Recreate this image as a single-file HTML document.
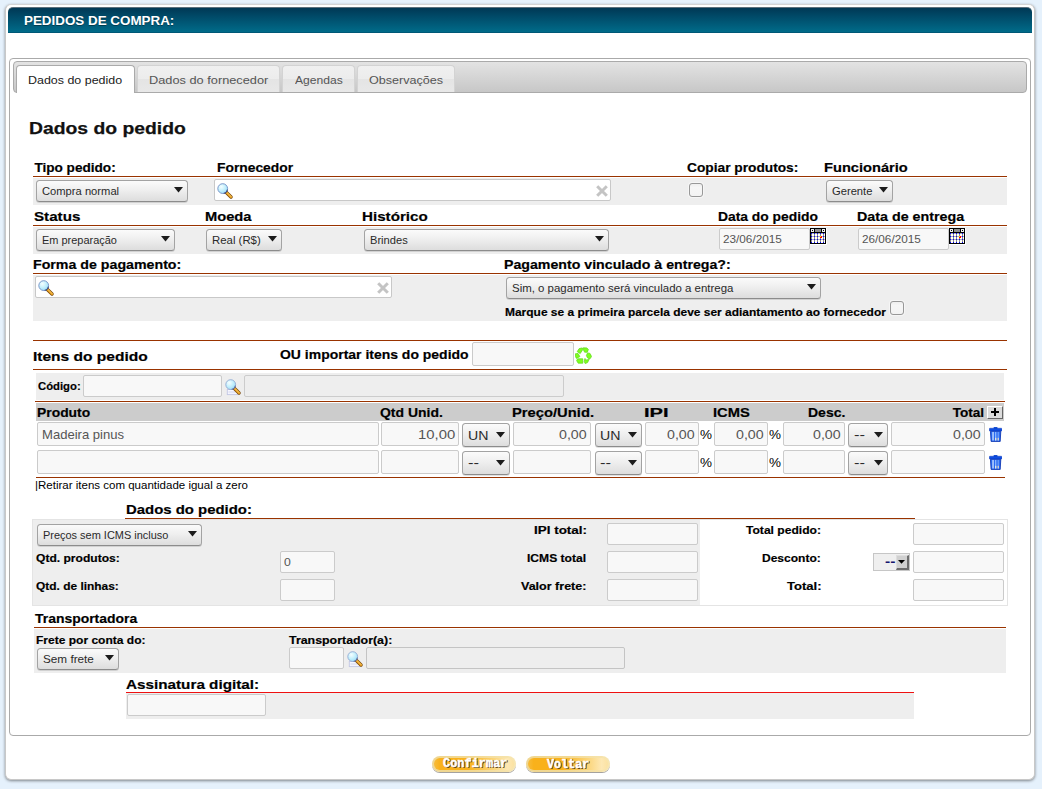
<!DOCTYPE html><html lang="pt-BR"><head><meta charset="utf-8"><title>Pedidos de compra</title><style>
html,body{margin:0;padding:0}
body{background:#e5f1fc;width:1042px;height:789px;overflow:hidden;position:relative;font-family:"Liberation Sans",sans-serif}
.a{position:absolute}
.bb{box-sizing:border-box}
.sel{box-sizing:border-box;border:1px solid #a3a3a3;border-bottom-color:#8c8c8c;border-radius:3.5px;background:linear-gradient(#fbfbfb,#efefef 45%,#dddddd);box-shadow:0 1px 0 rgba(0,0,0,.12)}
.t{position:absolute;white-space:nowrap;transform-origin:0 0;line-height:normal}

</style></head><body>
<div class="a bb" style="left:5px;top:4px;width:1030px;height:776px;background:#fff;border:1px solid #c8c8c8;border-top-color:#d4d4d4;border-radius:6px;box-shadow:0 1px 3px rgba(0,0,0,.45)"></div>
<div class="a bb" style="left:8px;top:7px;width:1024px;height:26px;background:linear-gradient(#003855,#004a68 35%,#006b89);border-radius:5px 5px 0 0;border-top:1px solid #5a6f7c;border-bottom:1px solid #005876"></div>
<div class="a bb" style="left:9px;top:58px;width:1022px;height:678px;background:#fff;border:1px solid #aaa;border-radius:4px"></div>
<div class="a bb" style="left:13px;top:61px;width:1014px;height:32px;background:linear-gradient(#e3e3e3,#d5d5d5 50%,#c7c7c7);border:1px solid #aaa;border-radius:4px"></div>
<div class="a bb" style="left:16px;top:65px;width:119px;height:28px;background:#fff;border:1px solid #aaa;border-bottom:0;border-radius:4px 4px 0 0"></div>
<div class="a bb" style="left:137px;top:65px;width:143px;height:27px;background:linear-gradient(#f0f0f0,#ececec 50%,#e4e4e4 52%,#e8e8e8);border:1px solid #d3d3d3;border-bottom:0;border-radius:4px 4px 0 0"></div>
<div class="a bb" style="left:282px;top:65px;width:73px;height:27px;background:linear-gradient(#f0f0f0,#ececec 50%,#e4e4e4 52%,#e8e8e8);border:1px solid #d3d3d3;border-bottom:0;border-radius:4px 4px 0 0"></div>
<div class="a bb" style="left:357px;top:65px;width:98px;height:27px;background:linear-gradient(#f0f0f0,#ececec 50%,#e4e4e4 52%,#e8e8e8);border:1px solid #d3d3d3;border-bottom:0;border-radius:4px 4px 0 0"></div>
<div class="a " style="left:33px;top:176px;width:974px;height:1px;background:#993300"></div>
<div class="a " style="left:33px;top:178px;width:974px;height:27px;background:#eeeeee"></div>
<div class="a sel" style="left:36px;top:180px;width:152px;height:22px;"></div>
<svg class="a" style="left:174px;top:187px" width="9" height="6" viewBox="0 0 9 6"><path d="M0 0H9L4.5 5.6Z" fill="#1c1c1c"/></svg>
<div class="a bb" style="left:214px;top:179px;width:397px;height:22px;background:#fff;border:1px solid #c8c8c8;border-radius:2px"></div>
<div class="a sel" style="left:826px;top:180px;width:67px;height:22px;"></div>
<svg class="a" style="left:879px;top:187px" width="9" height="6" viewBox="0 0 9 6"><path d="M0 0H9L4.5 5.6Z" fill="#1c1c1c"/></svg>
<div class="a " style="left:33px;top:225px;width:974px;height:1px;background:#993300"></div>
<div class="a " style="left:33px;top:227px;width:974px;height:27px;background:#eeeeee"></div>
<div class="a sel" style="left:36px;top:229px;width:139px;height:22px;"></div>
<svg class="a" style="left:161px;top:236px" width="9" height="6" viewBox="0 0 9 6"><path d="M0 0H9L4.5 5.6Z" fill="#1c1c1c"/></svg>
<div class="a sel" style="left:206px;top:229px;width:76px;height:22px;"></div>
<svg class="a" style="left:268px;top:236px" width="9" height="6" viewBox="0 0 9 6"><path d="M0 0H9L4.5 5.6Z" fill="#1c1c1c"/></svg>
<div class="a sel" style="left:364px;top:229px;width:245px;height:22px;"></div>
<svg class="a" style="left:595px;top:236px" width="9" height="6" viewBox="0 0 9 6"><path d="M0 0H9L4.5 5.6Z" fill="#1c1c1c"/></svg>
<div class="a bb" style="left:719px;top:228px;width:91px;height:22px;background:#f8f8f8;border:1px solid #cbcbcb;border-radius:2px"></div>
<div class="a bb" style="left:858px;top:228px;width:91px;height:22px;background:#f8f8f8;border:1px solid #cbcbcb;border-radius:2px"></div>
<div class="a " style="left:33px;top:273px;width:974px;height:1px;background:#993300"></div>
<div class="a " style="left:33px;top:275px;width:974px;height:46px;background:#eeeeee"></div>
<div class="a bb" style="left:35px;top:276px;width:357px;height:22px;background:#fff;border:1px solid #c8c8c8;border-radius:2px"></div>
<div class="a sel" style="left:506px;top:277px;width:315px;height:22px;"></div>
<svg class="a" style="left:807px;top:284px" width="9" height="6" viewBox="0 0 9 6"><path d="M0 0H9L4.5 5.6Z" fill="#1c1c1c"/></svg>
<div class="a " style="left:33px;top:340px;width:974px;height:1px;background:#993300"></div>
<div class="a bb" style="left:472px;top:342px;width:102px;height:24px;background:#f8f8f8;border:1px solid #cbcbcb;border-radius:2px"></div>
<div class="a " style="left:33px;top:369px;width:974px;height:1px;background:#993300"></div>
<div class="a " style="left:36px;top:373px;width:968px;height:27px;background:#eeeeee"></div>
<div class="a bb" style="left:83px;top:375px;width:139px;height:22px;background:#f8f8f8;border:1px solid #cbcbcb;border-radius:2px"></div>
<div class="a bb" style="left:244px;top:375px;width:320px;height:22px;background:#eee;border:1px solid #ccc;border-radius:2px"></div>
<div class="a " style="left:35px;top:401px;width:970px;height:1px;background:#993300"></div>
<div class="a " style="left:36px;top:403px;width:968px;height:18px;background:#cccccc"></div>
<div class="a bb" style="left:987px;top:406px;width:16px;height:13px;background:#dcdcdc;border:1px solid;border-color:#fff #666 #666 #fff"><div class="a" style="left:3px;top:4px;width:8px;height:2px;background:#000"></div><div class="a" style="left:6px;top:1px;width:2px;height:8px;background:#000"></div></div>
<div class="a bb" style="left:37px;top:422px;width:342px;height:24px;background:#f8f8f8;border:1px solid #cbcbcb;border-radius:2px"></div>
<div class="a bb" style="left:381px;top:422px;width:78px;height:24px;background:#f8f8f8;border:1px solid #cbcbcb;border-radius:2px"></div>
<div class="a sel" style="left:462px;top:423px;width:47.5px;height:24px;"></div>
<svg class="a" style="left:495.5px;top:432.3px" width="9" height="6" viewBox="0 0 9 6"><path d="M0 0H9L4.5 5.6Z" fill="#1c1c1c"/></svg>
<div class="a bb" style="left:513px;top:422px;width:78px;height:24px;background:#f8f8f8;border:1px solid #cbcbcb;border-radius:2px"></div>
<div class="a sel" style="left:594.5px;top:423px;width:47.0px;height:24px;"></div>
<svg class="a" style="left:627.5px;top:432.3px" width="9" height="6" viewBox="0 0 9 6"><path d="M0 0H9L4.5 5.6Z" fill="#1c1c1c"/></svg>
<div class="a bb" style="left:645px;top:422px;width:54px;height:24px;background:#f8f8f8;border:1px solid #cbcbcb;border-radius:2px"></div>
<div class="a bb" style="left:714px;top:422px;width:54px;height:24px;background:#f8f8f8;border:1px solid #cbcbcb;border-radius:2px"></div>
<div class="a bb" style="left:783px;top:422px;width:62px;height:24px;background:#f8f8f8;border:1px solid #cbcbcb;border-radius:2px"></div>
<div class="a sel" style="left:848.4px;top:423px;width:39.2px;height:24px;"></div>
<svg class="a" style="left:873.6px;top:432.3px" width="9" height="6" viewBox="0 0 9 6"><path d="M0 0H9L4.5 5.6Z" fill="#1c1c1c"/></svg>
<div class="a bb" style="left:891px;top:422px;width:94px;height:24px;background:#f8f8f8;border:1px solid #cbcbcb;border-radius:2px"></div>
<div class="a bb" style="left:37px;top:450px;width:342px;height:24px;background:#f8f8f8;border:1px solid #cbcbcb;border-radius:2px"></div>
<div class="a bb" style="left:381px;top:450px;width:78px;height:24px;background:#f8f8f8;border:1px solid #cbcbcb;border-radius:2px"></div>
<div class="a sel" style="left:462px;top:451px;width:47.5px;height:24px;"></div>
<svg class="a" style="left:495.5px;top:460.3px" width="9" height="6" viewBox="0 0 9 6"><path d="M0 0H9L4.5 5.6Z" fill="#1c1c1c"/></svg>
<div class="a bb" style="left:513px;top:450px;width:78px;height:24px;background:#f8f8f8;border:1px solid #cbcbcb;border-radius:2px"></div>
<div class="a sel" style="left:594.5px;top:451px;width:47.0px;height:24px;"></div>
<svg class="a" style="left:627.5px;top:460.3px" width="9" height="6" viewBox="0 0 9 6"><path d="M0 0H9L4.5 5.6Z" fill="#1c1c1c"/></svg>
<div class="a bb" style="left:645px;top:450px;width:54px;height:24px;background:#f8f8f8;border:1px solid #cbcbcb;border-radius:2px"></div>
<div class="a bb" style="left:714px;top:450px;width:54px;height:24px;background:#f8f8f8;border:1px solid #cbcbcb;border-radius:2px"></div>
<div class="a bb" style="left:783px;top:450px;width:62px;height:24px;background:#f8f8f8;border:1px solid #cbcbcb;border-radius:2px"></div>
<div class="a sel" style="left:848.4px;top:451px;width:39.2px;height:24px;"></div>
<svg class="a" style="left:873.6px;top:460.3px" width="9" height="6" viewBox="0 0 9 6"><path d="M0 0H9L4.5 5.6Z" fill="#1c1c1c"/></svg>
<div class="a bb" style="left:891px;top:450px;width:94px;height:24px;background:#f8f8f8;border:1px solid #cbcbcb;border-radius:2px"></div>
<div class="a " style="left:36px;top:477px;width:969px;height:1px;background:#993300"></div>
<div class="a " style="left:125px;top:518px;width:790px;height:1px;background:#993300"></div>
<div class="a bb" style="left:32px;top:519px;width:976px;height:87px;background:#fff;border:1px solid #e4e4e4"></div>
<div class="a " style="left:33px;top:520px;width:667px;height:85px;background:#eeeeee"></div>
<div class="a sel" style="left:37px;top:524px;width:165px;height:22px;"></div>
<svg class="a" style="left:188px;top:531px" width="9" height="6" viewBox="0 0 9 6"><path d="M0 0H9L4.5 5.6Z" fill="#1c1c1c"/></svg>
<div class="a bb" style="left:280px;top:551px;width:55px;height:21.5px;background:#f8f8f8;border:1px solid #cbcbcb;border-radius:2px"></div>
<div class="a bb" style="left:280px;top:579px;width:55px;height:21.5px;background:#f8f8f8;border:1px solid #cbcbcb;border-radius:2px"></div>
<div class="a bb" style="left:607px;top:523px;width:91px;height:21.5px;background:#f8f8f8;border:1px solid #cbcbcb;border-radius:2px"></div>
<div class="a bb" style="left:913px;top:523px;width:91px;height:21.5px;background:#f8f8f8;border:1px solid #cbcbcb;border-radius:2px"></div>
<div class="a bb" style="left:607px;top:551px;width:91px;height:21.5px;background:#f8f8f8;border:1px solid #cbcbcb;border-radius:2px"></div>
<div class="a bb" style="left:913px;top:551px;width:91px;height:21.5px;background:#f8f8f8;border:1px solid #cbcbcb;border-radius:2px"></div>
<div class="a bb" style="left:607px;top:579px;width:91px;height:21.5px;background:#f8f8f8;border:1px solid #cbcbcb;border-radius:2px"></div>
<div class="a bb" style="left:913px;top:579px;width:91px;height:21.5px;background:#f8f8f8;border:1px solid #cbcbcb;border-radius:2px"></div>
<div class="a bb" style="left:873px;top:553px;width:37px;height:18px;background:#efefef;border:1px solid #c6c6c6"><div class="a bb" style="left:22px;top:1px;width:13px;height:15px;background:#d0d0d0;border:1px solid;border-color:#dedede #6e6e6e #6e6e6e #dedede;border-width:1px 2px 2px 1px"></div><svg class="a" style="left:24.3px;top:6px" width="7" height="4" viewBox="0 0 7 4"><path d="M0 0H7L3.5 3.8Z" fill="#000"/></svg></div>
<div class="a " style="left:34px;top:627px;width:972px;height:1px;background:#993300"></div>
<div class="a " style="left:34px;top:629px;width:972px;height:44px;background:#eeeeee"></div>
<div class="a sel" style="left:37px;top:648px;width:82px;height:22px;"></div>
<svg class="a" style="left:105px;top:655px" width="9" height="6" viewBox="0 0 9 6"><path d="M0 0H9L4.5 5.6Z" fill="#1c1c1c"/></svg>
<div class="a bb" style="left:289px;top:647px;width:55px;height:21.5px;background:#f8f8f8;border:1px solid #cbcbcb;border-radius:2px"></div>
<div class="a bb" style="left:366px;top:647px;width:259px;height:21.5px;background:#eee;border:1px solid #c4c4c4;border-radius:2px"></div>
<div class="a " style="left:126px;top:692px;width:788px;height:1px;background:#ee1111"></div>
<div class="a " style="left:126px;top:693px;width:788px;height:26px;background:#eeeeee"></div>
<div class="a bb" style="left:127px;top:694px;width:139px;height:21.5px;background:#f8f8f8;border:1px solid #cbcbcb;border-radius:2px"></div>
<div class="a bb" style="left:689px;top:183px;width:14px;height:14px;background:linear-gradient(#efefef,#f6f6f6 30%,#f3f3f3);border:1px solid #989898;border-radius:3px;box-shadow:0 0 0 1px rgba(255,255,255,.45)"></div>
<div class="a bb" style="left:890px;top:301px;width:14px;height:14px;background:linear-gradient(#efefef,#f6f6f6 30%,#f3f3f3);border:1px solid #989898;border-radius:3px;box-shadow:0 0 0 1px rgba(255,255,255,.45)"></div>
<svg class="a" style="left:216.5px;top:182.8px" width="18" height="17" viewBox="0 0 18 17">
<defs><radialGradient id="lg216_182" cx="36%" cy="32%" r="75%"><stop offset="0" stop-color="#f4feff"/><stop offset="0.55" stop-color="#c2effc"/><stop offset="1" stop-color="#98daf8"/></radialGradient></defs>
<path d="M9.4 9.4L14 14" stroke="#7a4a0c" stroke-width="3.5" stroke-linecap="round"/>
<path d="M9.8 9.8L14 14" stroke="#e9a21f" stroke-width="2.1" stroke-linecap="round"/>
<path d="M10.4 9.9L14.1 13.6" stroke="#ffd583" stroke-width="0.7" stroke-linecap="round"/>
<circle cx="5.7" cy="5.6" r="4.9" fill="url(#lg216_182)" stroke="#6a88c0" stroke-width="0.85"/>
<path d="M10.5 6.6A4.9 4.9 0 0 1 6.7 10.4" fill="none" stroke="#3f4f86" stroke-width="1.05"/>
</svg>
<svg class="a" style="left:37.5px;top:280px" width="18" height="17" viewBox="0 0 18 17">
<defs><radialGradient id="lg37_280" cx="36%" cy="32%" r="75%"><stop offset="0" stop-color="#f4feff"/><stop offset="0.55" stop-color="#c2effc"/><stop offset="1" stop-color="#98daf8"/></radialGradient></defs>
<path d="M9.4 9.4L14 14" stroke="#7a4a0c" stroke-width="3.5" stroke-linecap="round"/>
<path d="M9.8 9.8L14 14" stroke="#e9a21f" stroke-width="2.1" stroke-linecap="round"/>
<path d="M10.4 9.9L14.1 13.6" stroke="#ffd583" stroke-width="0.7" stroke-linecap="round"/>
<circle cx="5.7" cy="5.6" r="4.9" fill="url(#lg37_280)" stroke="#6a88c0" stroke-width="0.85"/>
<path d="M10.5 6.6A4.9 4.9 0 0 1 6.7 10.4" fill="none" stroke="#3f4f86" stroke-width="1.05"/>
</svg>
<svg class="a" style="left:225.1px;top:378.6px" width="18" height="17" viewBox="0 0 18 17"><rect x="2.3" y="10.4" width="10.4" height="5.2" fill="#f6f7ff" stroke="#c2c6e4" stroke-width="0.9"/><rect x="3.4" y="12" width="7" height="2.2" fill="#e4e6f6"/>
<defs><radialGradient id="lg225_378" cx="36%" cy="32%" r="75%"><stop offset="0" stop-color="#f4feff"/><stop offset="0.55" stop-color="#c2effc"/><stop offset="1" stop-color="#98daf8"/></radialGradient></defs>
<path d="M9.4 9.4L14 14" stroke="#7a4a0c" stroke-width="3.5" stroke-linecap="round"/>
<path d="M9.8 9.8L14 14" stroke="#e9a21f" stroke-width="2.1" stroke-linecap="round"/>
<path d="M10.4 9.9L14.1 13.6" stroke="#ffd583" stroke-width="0.7" stroke-linecap="round"/>
<circle cx="5.7" cy="5.6" r="4.9" fill="url(#lg225_378)" stroke="#8ea6d2" stroke-width="0.85"/>
<path d="M10.5 6.6A4.9 4.9 0 0 1 6.7 10.4" fill="none" stroke="#6272a2" stroke-width="1.05"/>
</svg>
<svg class="a" style="left:346.5px;top:650.8px" width="18" height="17" viewBox="0 0 18 17"><rect x="2.3" y="10.4" width="10.4" height="5.2" fill="#f6f7ff" stroke="#c2c6e4" stroke-width="0.9"/><rect x="3.4" y="12" width="7" height="2.2" fill="#e4e6f6"/>
<defs><radialGradient id="lg346_650" cx="36%" cy="32%" r="75%"><stop offset="0" stop-color="#f4feff"/><stop offset="0.55" stop-color="#c2effc"/><stop offset="1" stop-color="#98daf8"/></radialGradient></defs>
<path d="M9.4 9.4L14 14" stroke="#7a4a0c" stroke-width="3.5" stroke-linecap="round"/>
<path d="M9.8 9.8L14 14" stroke="#e9a21f" stroke-width="2.1" stroke-linecap="round"/>
<path d="M10.4 9.9L14.1 13.6" stroke="#ffd583" stroke-width="0.7" stroke-linecap="round"/>
<circle cx="5.7" cy="5.6" r="4.9" fill="url(#lg346_650)" stroke="#8ea6d2" stroke-width="0.85"/>
<path d="M10.5 6.6A4.9 4.9 0 0 1 6.7 10.4" fill="none" stroke="#6272a2" stroke-width="1.05"/>
</svg>
<svg class="a" style="left:595.1px;top:184.1px" width="14" height="14" viewBox="0 0 14 14"><path d="M2.2 2.2L11.8 11.8M11.8 2.2L2.2 11.8" stroke="#c4c4c4" stroke-width="3" stroke-linecap="butt"/></svg>
<svg class="a" style="left:376px;top:281.1px" width="14" height="14" viewBox="0 0 14 14"><path d="M2.2 2.2L11.8 11.8M11.8 2.2L2.2 11.8" stroke="#c4c4c4" stroke-width="3" stroke-linecap="butt"/></svg>
<svg class="a" style="left:810px;top:228px" width="17" height="17" viewBox="0 0 17 17" shape-rendering="crispEdges"><path d="M0 0h17v17h-17z" fill="#fff"/><path d="M0 0h16v16h-16z" fill="#000"/><path d="M1 1h3v1h-3z" fill="#f0f0f0"/><path d="M5 1h6v1h-6z" fill="#8f8f8f"/><path d="M12 1h3v1h-3z" fill="#f0f0f0"/><path d="M1 2h1v1h-1z" fill="#f0f0f0"/><path d="M3 2h1v1h-1z" fill="#f0f0f0"/><path d="M5 2h6v1h-6z" fill="#8f8f8f"/><path d="M12 2h1v1h-1z" fill="#f0f0f0"/><path d="M14 2h1v1h-1z" fill="#f0f0f0"/><path d="M1 3h3v1h-3z" fill="#f0f0f0"/><path d="M5 3h6v1h-6z" fill="#8f8f8f"/><path d="M12 3h3v1h-3z" fill="#f0f0f0"/><path d="M1 5h1v1h-1z" fill="#00f"/><path d="M2 5h2v1h-2z" fill="#b4b4b0"/><path d="M4 5h1v1h-1z" fill="#00f"/><path d="M5 5h2v1h-2z" fill="#b4b4b0"/><path d="M7 5h1v1h-1z" fill="#00f"/><path d="M8 5h2v1h-2z" fill="#b4b4b0"/><path d="M10 5h1v1h-1z" fill="#00f"/><path d="M11 5h2v1h-2z" fill="#b4b4b0"/><path d="M13 5h1v1h-1z" fill="#00f"/><path d="M14 5h1v1h-1z" fill="#b4b4b0"/><path d="M1 6h1v1h-1z" fill="#8a8a8a"/><path d="M2 6h2v1h-2z" fill="#fff"/><path d="M4 6h1v1h-1z" fill="#8a8a8a"/><path d="M5 6h2v1h-2z" fill="#fff"/><path d="M7 6h1v1h-1z" fill="#8a8a8a"/><path d="M8 6h2v1h-2z" fill="#fff"/><path d="M10 6h1v1h-1z" fill="#8a8a8a"/><path d="M11 6h2v1h-2z" fill="#fff"/><path d="M13 6h1v1h-1z" fill="#8a8a8a"/><path d="M14 6h1v1h-1z" fill="#fff"/><path d="M1 7h1v1h-1z" fill="#8a8a8a"/><path d="M2 7h2v1h-2z" fill="#fff"/><path d="M4 7h1v1h-1z" fill="#8a8a8a"/><path d="M5 7h2v1h-2z" fill="#fff"/><path d="M7 7h1v1h-1z" fill="#8a8a8a"/><path d="M8 7h2v1h-2z" fill="#fff"/><path d="M10 7h1v1h-1z" fill="#8a8a8a"/><path d="M11 7h2v1h-2z" fill="#fff"/><path d="M13 7h1v1h-1z" fill="#8a8a8a"/><path d="M14 7h1v1h-1z" fill="#fff"/><path d="M1 8h1v1h-1z" fill="#00f"/><path d="M2 8h2v1h-2z" fill="#b4b4b0"/><path d="M4 8h1v1h-1z" fill="#00f"/><path d="M5 8h2v1h-2z" fill="#b4b4b0"/><path d="M7 8h1v1h-1z" fill="#00f"/><path d="M8 8h2v1h-2z" fill="#b4b4b0"/><path d="M10 8h1v1h-1z" fill="#fe0"/><path d="M11 8h1v1h-1z" fill="#f00"/><path d="M12 8h1v1h-1z" fill="#b4b4b0"/><path d="M13 8h1v1h-1z" fill="#00f"/><path d="M14 8h1v1h-1z" fill="#b4b4b0"/><path d="M1 9h1v1h-1z" fill="#8a8a8a"/><path d="M2 9h2v1h-2z" fill="#fff"/><path d="M4 9h1v1h-1z" fill="#8a8a8a"/><path d="M5 9h2v1h-2z" fill="#fff"/><path d="M7 9h1v1h-1z" fill="#8a8a8a"/><path d="M8 9h2v1h-2z" fill="#fff"/><path d="M10 9h2v1h-2z" fill="#f00"/><path d="M12 9h1v1h-1z" fill="#fff"/><path d="M13 9h1v1h-1z" fill="#8a8a8a"/><path d="M14 9h1v1h-1z" fill="#fff"/><path d="M1 10h1v1h-1z" fill="#8a8a8a"/><path d="M2 10h2v1h-2z" fill="#fff"/><path d="M4 10h1v1h-1z" fill="#8a8a8a"/><path d="M5 10h2v1h-2z" fill="#fff"/><path d="M7 10h1v1h-1z" fill="#8a8a8a"/><path d="M8 10h2v1h-2z" fill="#fff"/><path d="M10 10h1v1h-1z" fill="#8a8a8a"/><path d="M11 10h2v1h-2z" fill="#fff"/><path d="M13 10h1v1h-1z" fill="#8a8a8a"/><path d="M14 10h1v1h-1z" fill="#fff"/><path d="M1 11h1v1h-1z" fill="#00f"/><path d="M2 11h2v1h-2z" fill="#b4b4b0"/><path d="M4 11h1v1h-1z" fill="#00f"/><path d="M5 11h2v1h-2z" fill="#b4b4b0"/><path d="M7 11h1v1h-1z" fill="#00f"/><path d="M8 11h2v1h-2z" fill="#b4b4b0"/><path d="M10 11h1v1h-1z" fill="#00f"/><path d="M11 11h2v1h-2z" fill="#b4b4b0"/><path d="M13 11h1v1h-1z" fill="#00f"/><path d="M14 11h1v1h-1z" fill="#b4b4b0"/><path d="M1 12h1v1h-1z" fill="#8a8a8a"/><path d="M2 12h2v1h-2z" fill="#fff"/><path d="M4 12h1v1h-1z" fill="#8a8a8a"/><path d="M5 12h2v1h-2z" fill="#fff"/><path d="M7 12h1v1h-1z" fill="#8a8a8a"/><path d="M8 12h2v1h-2z" fill="#fff"/><path d="M10 12h1v1h-1z" fill="#8a8a8a"/><path d="M11 12h2v1h-2z" fill="#fff"/><path d="M13 12h1v1h-1z" fill="#8a8a8a"/><path d="M14 12h1v1h-1z" fill="#fff"/><path d="M1 13h1v1h-1z" fill="#8a8a8a"/><path d="M2 13h2v1h-2z" fill="#fff"/><path d="M4 13h1v1h-1z" fill="#8a8a8a"/><path d="M5 13h2v1h-2z" fill="#fff"/><path d="M7 13h1v1h-1z" fill="#8a8a8a"/><path d="M8 13h2v1h-2z" fill="#fff"/><path d="M10 13h1v1h-1z" fill="#8a8a8a"/><path d="M11 13h2v1h-2z" fill="#fff"/><path d="M13 13h1v1h-1z" fill="#8a8a8a"/><path d="M14 13h1v1h-1z" fill="#fff"/><path d="M1 14h1v1h-1z" fill="#00f"/><path d="M2 14h2v1h-2z" fill="#fff"/><path d="M4 14h1v1h-1z" fill="#00f"/><path d="M5 14h2v1h-2z" fill="#fff"/><path d="M7 14h1v1h-1z" fill="#00f"/><path d="M8 14h2v1h-2z" fill="#fff"/><path d="M10 14h1v1h-1z" fill="#00f"/><path d="M11 14h2v1h-2z" fill="#fff"/><path d="M13 14h1v1h-1z" fill="#00f"/><path d="M14 14h1v1h-1z" fill="#fff"/></svg>
<svg class="a" style="left:949px;top:228px" width="17" height="17" viewBox="0 0 17 17" shape-rendering="crispEdges"><path d="M0 0h17v17h-17z" fill="#fff"/><path d="M0 0h16v16h-16z" fill="#000"/><path d="M1 1h3v1h-3z" fill="#f0f0f0"/><path d="M5 1h6v1h-6z" fill="#8f8f8f"/><path d="M12 1h3v1h-3z" fill="#f0f0f0"/><path d="M1 2h1v1h-1z" fill="#f0f0f0"/><path d="M3 2h1v1h-1z" fill="#f0f0f0"/><path d="M5 2h6v1h-6z" fill="#8f8f8f"/><path d="M12 2h1v1h-1z" fill="#f0f0f0"/><path d="M14 2h1v1h-1z" fill="#f0f0f0"/><path d="M1 3h3v1h-3z" fill="#f0f0f0"/><path d="M5 3h6v1h-6z" fill="#8f8f8f"/><path d="M12 3h3v1h-3z" fill="#f0f0f0"/><path d="M1 5h1v1h-1z" fill="#00f"/><path d="M2 5h2v1h-2z" fill="#b4b4b0"/><path d="M4 5h1v1h-1z" fill="#00f"/><path d="M5 5h2v1h-2z" fill="#b4b4b0"/><path d="M7 5h1v1h-1z" fill="#00f"/><path d="M8 5h2v1h-2z" fill="#b4b4b0"/><path d="M10 5h1v1h-1z" fill="#00f"/><path d="M11 5h2v1h-2z" fill="#b4b4b0"/><path d="M13 5h1v1h-1z" fill="#00f"/><path d="M14 5h1v1h-1z" fill="#b4b4b0"/><path d="M1 6h1v1h-1z" fill="#8a8a8a"/><path d="M2 6h2v1h-2z" fill="#fff"/><path d="M4 6h1v1h-1z" fill="#8a8a8a"/><path d="M5 6h2v1h-2z" fill="#fff"/><path d="M7 6h1v1h-1z" fill="#8a8a8a"/><path d="M8 6h2v1h-2z" fill="#fff"/><path d="M10 6h1v1h-1z" fill="#8a8a8a"/><path d="M11 6h2v1h-2z" fill="#fff"/><path d="M13 6h1v1h-1z" fill="#8a8a8a"/><path d="M14 6h1v1h-1z" fill="#fff"/><path d="M1 7h1v1h-1z" fill="#8a8a8a"/><path d="M2 7h2v1h-2z" fill="#fff"/><path d="M4 7h1v1h-1z" fill="#8a8a8a"/><path d="M5 7h2v1h-2z" fill="#fff"/><path d="M7 7h1v1h-1z" fill="#8a8a8a"/><path d="M8 7h2v1h-2z" fill="#fff"/><path d="M10 7h1v1h-1z" fill="#8a8a8a"/><path d="M11 7h2v1h-2z" fill="#fff"/><path d="M13 7h1v1h-1z" fill="#8a8a8a"/><path d="M14 7h1v1h-1z" fill="#fff"/><path d="M1 8h1v1h-1z" fill="#00f"/><path d="M2 8h2v1h-2z" fill="#b4b4b0"/><path d="M4 8h1v1h-1z" fill="#00f"/><path d="M5 8h2v1h-2z" fill="#b4b4b0"/><path d="M7 8h1v1h-1z" fill="#00f"/><path d="M8 8h2v1h-2z" fill="#b4b4b0"/><path d="M10 8h1v1h-1z" fill="#fe0"/><path d="M11 8h1v1h-1z" fill="#f00"/><path d="M12 8h1v1h-1z" fill="#b4b4b0"/><path d="M13 8h1v1h-1z" fill="#00f"/><path d="M14 8h1v1h-1z" fill="#b4b4b0"/><path d="M1 9h1v1h-1z" fill="#8a8a8a"/><path d="M2 9h2v1h-2z" fill="#fff"/><path d="M4 9h1v1h-1z" fill="#8a8a8a"/><path d="M5 9h2v1h-2z" fill="#fff"/><path d="M7 9h1v1h-1z" fill="#8a8a8a"/><path d="M8 9h2v1h-2z" fill="#fff"/><path d="M10 9h2v1h-2z" fill="#f00"/><path d="M12 9h1v1h-1z" fill="#fff"/><path d="M13 9h1v1h-1z" fill="#8a8a8a"/><path d="M14 9h1v1h-1z" fill="#fff"/><path d="M1 10h1v1h-1z" fill="#8a8a8a"/><path d="M2 10h2v1h-2z" fill="#fff"/><path d="M4 10h1v1h-1z" fill="#8a8a8a"/><path d="M5 10h2v1h-2z" fill="#fff"/><path d="M7 10h1v1h-1z" fill="#8a8a8a"/><path d="M8 10h2v1h-2z" fill="#fff"/><path d="M10 10h1v1h-1z" fill="#8a8a8a"/><path d="M11 10h2v1h-2z" fill="#fff"/><path d="M13 10h1v1h-1z" fill="#8a8a8a"/><path d="M14 10h1v1h-1z" fill="#fff"/><path d="M1 11h1v1h-1z" fill="#00f"/><path d="M2 11h2v1h-2z" fill="#b4b4b0"/><path d="M4 11h1v1h-1z" fill="#00f"/><path d="M5 11h2v1h-2z" fill="#b4b4b0"/><path d="M7 11h1v1h-1z" fill="#00f"/><path d="M8 11h2v1h-2z" fill="#b4b4b0"/><path d="M10 11h1v1h-1z" fill="#00f"/><path d="M11 11h2v1h-2z" fill="#b4b4b0"/><path d="M13 11h1v1h-1z" fill="#00f"/><path d="M14 11h1v1h-1z" fill="#b4b4b0"/><path d="M1 12h1v1h-1z" fill="#8a8a8a"/><path d="M2 12h2v1h-2z" fill="#fff"/><path d="M4 12h1v1h-1z" fill="#8a8a8a"/><path d="M5 12h2v1h-2z" fill="#fff"/><path d="M7 12h1v1h-1z" fill="#8a8a8a"/><path d="M8 12h2v1h-2z" fill="#fff"/><path d="M10 12h1v1h-1z" fill="#8a8a8a"/><path d="M11 12h2v1h-2z" fill="#fff"/><path d="M13 12h1v1h-1z" fill="#8a8a8a"/><path d="M14 12h1v1h-1z" fill="#fff"/><path d="M1 13h1v1h-1z" fill="#8a8a8a"/><path d="M2 13h2v1h-2z" fill="#fff"/><path d="M4 13h1v1h-1z" fill="#8a8a8a"/><path d="M5 13h2v1h-2z" fill="#fff"/><path d="M7 13h1v1h-1z" fill="#8a8a8a"/><path d="M8 13h2v1h-2z" fill="#fff"/><path d="M10 13h1v1h-1z" fill="#8a8a8a"/><path d="M11 13h2v1h-2z" fill="#fff"/><path d="M13 13h1v1h-1z" fill="#8a8a8a"/><path d="M14 13h1v1h-1z" fill="#fff"/><path d="M1 14h1v1h-1z" fill="#00f"/><path d="M2 14h2v1h-2z" fill="#fff"/><path d="M4 14h1v1h-1z" fill="#00f"/><path d="M5 14h2v1h-2z" fill="#fff"/><path d="M7 14h1v1h-1z" fill="#00f"/><path d="M8 14h2v1h-2z" fill="#fff"/><path d="M10 14h1v1h-1z" fill="#00f"/><path d="M11 14h2v1h-2z" fill="#fff"/><path d="M13 14h1v1h-1z" fill="#00f"/><path d="M14 14h1v1h-1z" fill="#fff"/></svg>
<svg class="a" style="left:575px;top:347px" width="17" height="18" viewBox="0 0 17 18">
<g fill="#7dff1e" stroke="#5fd61a" stroke-width="0.7" stroke-linejoin="round">
<path d="M4.2 1.6L7.2 0.9L7.9 2.4L5.2 6.6L2.2 4.6Z"/>
<path d="M8.2 0.8L11.8 0.9L13.4 2.4L12.3 5.3L9.6 5.2L8.4 2.8Z"/>
<path d="M12.6 5.9L15 6.4L16.6 9.6L14.6 12.2L12.3 10.6L11.4 8.4Z"/>
<path d="M10 11.4L10.4 13L14 12.6L12.6 15.6L10.2 16.6L9.2 14.6Z"/>
<path d="M7.8 11.8L7.8 16.2L3.2 16.2L1.6 13.6L2.6 11.8Z"/>
<path d="M0.3 6.8L3 6.4L4.9 9.6L3.4 10.4L1.4 11.4L0.4 9.4Z"/>
</g></svg>
<svg class="a" style="left:988.6px;top:426.8px" width="13.3" height="15.2" viewBox="0 0 14 16">
<rect x="4.8" y="0.1" width="4.2" height="2" rx="0.8" fill="#1a55dc"/>
<rect x="0.3" y="1.3" width="13.3" height="3" rx="0.7" fill="#0f4fe4" stroke="#0a34b0" stroke-width="0.5"/>
<path d="M1.5 4.5H12.4L11.8 15.2H2.2Z" fill="#2a6af0" stroke="#0a34b0" stroke-width="0.9"/>
<rect x="3.5" y="5.2" width="1.5" height="9" fill="#c4dbff"/><rect x="6.4" y="5.2" width="1.3" height="9" fill="#92bbff"/><rect x="9.1" y="5.2" width="1.2" height="9" fill="#74a4f8"/>
<rect x="6.4" y="11.4" width="1.3" height="2.8" fill="#f4e8d2"/><rect x="9.1" y="11.4" width="1.2" height="2.8" fill="#ebdec6"/>
</svg>
<svg class="a" style="left:988.6px;top:455px" width="13.3" height="15.2" viewBox="0 0 14 16">
<rect x="4.8" y="0.1" width="4.2" height="2" rx="0.8" fill="#1a55dc"/>
<rect x="0.3" y="1.3" width="13.3" height="3" rx="0.7" fill="#0f4fe4" stroke="#0a34b0" stroke-width="0.5"/>
<path d="M1.5 4.5H12.4L11.8 15.2H2.2Z" fill="#2a6af0" stroke="#0a34b0" stroke-width="0.9"/>
<rect x="3.5" y="5.2" width="1.5" height="9" fill="#c4dbff"/><rect x="6.4" y="5.2" width="1.3" height="9" fill="#92bbff"/><rect x="9.1" y="5.2" width="1.2" height="9" fill="#74a4f8"/>
<rect x="6.4" y="11.4" width="1.3" height="2.8" fill="#f4e8d2"/><rect x="9.1" y="11.4" width="1.2" height="2.8" fill="#ebdec6"/>
</svg>
<div class="a " style="left:431.5px;top:756px;width:84.7px;height:16px;border-radius:8px;background:linear-gradient(90deg,#efd690,#f3d890 50%,#f7e6b2);box-shadow:0 1px 0 rgba(90,85,80,.55)"><div class="a" style="left:2px;top:1.6px;right:2px;bottom:1.6px;border-radius:7px;background:linear-gradient(90deg,#f7bb3a 0,#f9b11b 7%,#f9b11b 42%,#fbd57a 75%,#fde8b4 92%,#fbe2a2 100%)"></div></div>
<div class="a " style="left:525.8px;top:756px;width:84.6px;height:16px;border-radius:8px;background:linear-gradient(90deg,#efd690,#f3d890 50%,#f7e6b2);box-shadow:0 1px 0 rgba(90,85,80,.55)"><div class="a" style="left:2px;top:1.6px;right:2px;bottom:1.6px;border-radius:7px;background:linear-gradient(90deg,#f7bb3a 0,#f9b11b 7%,#f9b11b 42%,#fbd57a 75%,#fde8b4 92%,#fbe2a2 100%)"></div></div>
<span class="t" style="left:23.89px;top:14.00px;transform:scaleX(1.0810);font-family:'Liberation Sans',sans-serif;font-size:12.4px;font-weight:bold;color:#fff;text-shadow:0 1px 0 rgba(0,0,0,.35)">PEDIDOS DE COMPRA:</span>
<span class="t" style="left:28.33px;top:74.00px;transform:scaleX(1.0929);font-family:'Liberation Sans',sans-serif;font-size:11.4px;font-weight:normal;color:#212121;">Dados do pedido</span>
<span class="t" style="left:149.10px;top:74.00px;transform:scaleX(1.1213);font-family:'Liberation Sans',sans-serif;font-size:11.4px;font-weight:normal;color:#555;">Dados do fornecedor</span>
<span class="t" style="left:295.03px;top:74.00px;transform:scaleX(1.0628);font-family:'Liberation Sans',sans-serif;font-size:11.4px;font-weight:normal;color:#555;">Agendas</span>
<span class="t" style="left:369.00px;top:74.00px;transform:scaleX(1.1041);font-family:'Liberation Sans',sans-serif;font-size:11.4px;font-weight:normal;color:#555;">Observações</span>
<span class="t" style="left:28.54px;top:118.00px;transform:scaleX(1.1249);font-family:'Liberation Sans',sans-serif;font-size:17.2px;font-weight:bold;color:#111;-webkit-text-stroke:0.25px #111;">Dados do pedido</span>
<span class="t" style="left:34.38px;top:160.30px;font-family:'Liberation Sans',sans-serif;font-size:13.6px;font-weight:bold;color:#000;-webkit-text-stroke:0.2px #000;">Tipo pedido:</span>
<span class="t" style="left:216.64px;top:160.30px;transform:scaleX(1.0166);font-family:'Liberation Sans',sans-serif;font-size:13.6px;font-weight:bold;color:#000;-webkit-text-stroke:0.2px #000;">Fornecedor</span>
<span class="t" style="left:687.39px;top:160.30px;transform:scaleX(1.0097);font-family:'Liberation Sans',sans-serif;font-size:13.6px;font-weight:bold;color:#000;-webkit-text-stroke:0.2px #000;">Copiar produtos:</span>
<span class="t" style="left:823.77px;top:160.30px;transform:scaleX(1.0771);font-family:'Liberation Sans',sans-serif;font-size:13.6px;font-weight:bold;color:#000;-webkit-text-stroke:0.2px #000;">Funcionário</span>
<span class="t" style="left:41.94px;top:185.00px;transform:scaleX(0.9728);font-family:'Liberation Sans',sans-serif;font-size:11.5px;font-weight:normal;color:#2a2a2a;">Compra normal</span>
<span class="t" style="left:831.95px;top:185.00px;transform:scaleX(0.9729);font-family:'Liberation Sans',sans-serif;font-size:11.5px;font-weight:normal;color:#2a2a2a;">Gerente</span>
<span class="t" style="left:34.05px;top:208.50px;transform:scaleX(1.1149);font-family:'Liberation Sans',sans-serif;font-size:13.6px;font-weight:bold;color:#000;-webkit-text-stroke:0.2px #000;">Status</span>
<span class="t" style="left:204.67px;top:208.50px;transform:scaleX(1.0802);font-family:'Liberation Sans',sans-serif;font-size:13.6px;font-weight:bold;color:#000;-webkit-text-stroke:0.2px #000;">Moeda</span>
<span class="t" style="left:361.83px;top:208.50px;transform:scaleX(1.1151);font-family:'Liberation Sans',sans-serif;font-size:13.6px;font-weight:bold;color:#000;-webkit-text-stroke:0.2px #000;">Histórico</span>
<span class="t" style="left:717.94px;top:208.50px;transform:scaleX(1.0181);font-family:'Liberation Sans',sans-serif;font-size:13.6px;font-weight:bold;color:#000;-webkit-text-stroke:0.2px #000;">Data do pedido</span>
<span class="t" style="left:856.50px;top:208.50px;transform:scaleX(1.0502);font-family:'Liberation Sans',sans-serif;font-size:13.6px;font-weight:bold;color:#000;-webkit-text-stroke:0.2px #000;">Data de entrega</span>
<span class="t" style="left:42.00px;top:234.00px;transform:scaleX(0.9528);font-family:'Liberation Sans',sans-serif;font-size:11.5px;font-weight:normal;color:#2a2a2a;">Em preparação</span>
<span class="t" style="left:211.96px;top:234.00px;transform:scaleX(0.9904);font-family:'Liberation Sans',sans-serif;font-size:11.5px;font-weight:normal;color:#2a2a2a;">Real (R$)</span>
<span class="t" style="left:369.99px;top:234.00px;transform:scaleX(0.9672);font-family:'Liberation Sans',sans-serif;font-size:11.5px;font-weight:normal;color:#2a2a2a;">Brindes</span>
<span class="t" style="left:722.75px;top:233.20px;transform:scaleX(1.0308);font-family:'Liberation Sans',sans-serif;font-size:11.4px;font-weight:normal;color:#555;">23/06/2015</span>
<span class="t" style="left:861.75px;top:233.20px;transform:scaleX(1.0308);font-family:'Liberation Sans',sans-serif;font-size:11.4px;font-weight:normal;color:#555;">26/06/2015</span>
<span class="t" style="left:33.41px;top:257.20px;transform:scaleX(1.0441);font-family:'Liberation Sans',sans-serif;font-size:13.6px;font-weight:bold;color:#000;-webkit-text-stroke:0.2px #000;">Forma de pagamento:</span>
<span class="t" style="left:503.61px;top:257.20px;transform:scaleX(1.0421);font-family:'Liberation Sans',sans-serif;font-size:13.6px;font-weight:bold;color:#000;-webkit-text-stroke:0.2px #000;">Pagamento vinculado à entrega?:</span>
<span class="t" style="left:511.91px;top:282.00px;transform:scaleX(0.9953);font-family:'Liberation Sans',sans-serif;font-size:11.5px;font-weight:normal;color:#2a2a2a;">Sim, o pagamento será vinculado a entrega</span>
<span class="t" style="left:504.94px;top:306.00px;transform:scaleX(1.0399);font-family:'Liberation Sans',sans-serif;font-size:11.5px;font-weight:bold;color:#000;-webkit-text-stroke:0.18px #000;">Marque se a primeira parcela deve ser adiantamento ao fornecedor</span>
<span class="t" style="left:33.31px;top:349.00px;transform:scaleX(1.1423);font-family:'Liberation Sans',sans-serif;font-size:13.6px;font-weight:bold;color:#000;-webkit-text-stroke:0.2px #000;">Itens do pedido</span>
<span class="t" style="left:279.97px;top:347.00px;transform:scaleX(1.0277);font-family:'Liberation Sans',sans-serif;font-size:13.6px;font-weight:bold;color:#000;-webkit-text-stroke:0.2px #000;">OU importar itens do pedido</span>
<span class="t" style="left:38.24px;top:380.00px;transform:scaleX(0.9828);font-family:'Liberation Sans',sans-serif;font-size:11.5px;font-weight:bold;color:#000;-webkit-text-stroke:0.18px #000;">Código:</span>
<span class="t" style="left:36.53px;top:405.00px;transform:scaleX(1.0208);font-family:'Liberation Sans',sans-serif;font-size:13.6px;font-weight:bold;color:#000;-webkit-text-stroke:0.2px #000;">Produto</span>
<span class="t" style="left:380.27px;top:405.00px;transform:scaleX(1.0265);font-family:'Liberation Sans',sans-serif;font-size:13.6px;font-weight:bold;color:#000;-webkit-text-stroke:0.2px #000;">Qtd Unid.</span>
<span class="t" style="left:512.27px;top:405.00px;transform:scaleX(1.0856);font-family:'Liberation Sans',sans-serif;font-size:13.6px;font-weight:bold;color:#000;-webkit-text-stroke:0.2px #000;">Preço/Unid.</span>
<span class="t" style="left:644.15px;top:405.00px;transform:scaleX(1.4795);font-family:'Liberation Sans',sans-serif;font-size:13.6px;font-weight:bold;color:#000;-webkit-text-stroke:0.2px #000;">IPI</span>
<span class="t" style="left:713.17px;top:405.00px;transform:scaleX(1.0839);font-family:'Liberation Sans',sans-serif;font-size:13.6px;font-weight:bold;color:#000;-webkit-text-stroke:0.2px #000;">ICMS</span>
<span class="t" style="left:808.42px;top:405.00px;transform:scaleX(1.0295);font-family:'Liberation Sans',sans-serif;font-size:13.6px;font-weight:bold;color:#000;-webkit-text-stroke:0.2px #000;">Desc.</span>
<span class="t" style="left:952.68px;top:405.00px;font-family:'Liberation Sans',sans-serif;font-size:13.6px;font-weight:bold;color:#000;-webkit-text-stroke:0.2px #000;">Total</span>
<span class="t" style="left:467.85px;top:427.50px;transform:scaleX(1.0483);font-family:'Liberation Sans',sans-serif;font-size:13.5px;font-weight:normal;color:#2a2a2a;">UN</span>
<span class="t" style="left:600.35px;top:427.50px;transform:scaleX(1.0483);font-family:'Liberation Sans',sans-serif;font-size:13.5px;font-weight:normal;color:#2a2a2a;">UN</span>
<span class="t" style="left:699.51px;top:427.30px;transform:scaleX(1.0065);font-family:'Liberation Sans',sans-serif;font-size:13.4px;font-weight:normal;color:#000;">%</span>
<span class="t" style="left:768.71px;top:427.30px;transform:scaleX(1.0065);font-family:'Liberation Sans',sans-serif;font-size:13.4px;font-weight:normal;color:#000;">%</span>
<span class="t" style="left:854.13px;top:426.60px;transform:scaleX(1.2347);font-family:'Liberation Sans',sans-serif;font-size:13.5px;font-weight:normal;color:#2a2a2a;">--</span>
<span class="t" style="left:41.53px;top:427.30px;transform:scaleX(0.9753);font-family:'Liberation Sans',sans-serif;font-size:13.4px;font-weight:normal;color:#555;">Madeira pinus</span>
<span class="t" style="left:418.11px;top:427.30px;transform:scaleX(1.1090);font-family:'Liberation Sans',sans-serif;font-size:13.4px;font-weight:normal;color:#555;">10,00</span>
<span class="t" style="left:559.29px;top:427.30px;transform:scaleX(1.0609);font-family:'Liberation Sans',sans-serif;font-size:13.4px;font-weight:normal;color:#555;">0,00</span>
<span class="t" style="left:667.19px;top:427.30px;transform:scaleX(1.0609);font-family:'Liberation Sans',sans-serif;font-size:13.4px;font-weight:normal;color:#555;">0,00</span>
<span class="t" style="left:736.29px;top:427.30px;transform:scaleX(1.0609);font-family:'Liberation Sans',sans-serif;font-size:13.4px;font-weight:normal;color:#555;">0,00</span>
<span class="t" style="left:813.09px;top:427.30px;transform:scaleX(1.0609);font-family:'Liberation Sans',sans-serif;font-size:13.4px;font-weight:normal;color:#555;">0,00</span>
<span class="t" style="left:953.19px;top:427.30px;transform:scaleX(1.0609);font-family:'Liberation Sans',sans-serif;font-size:13.4px;font-weight:normal;color:#555;">0,00</span>
<span class="t" style="left:467.73px;top:454.60px;transform:scaleX(1.2347);font-family:'Liberation Sans',sans-serif;font-size:13.5px;font-weight:normal;color:#2a2a2a;">--</span>
<span class="t" style="left:600.23px;top:454.60px;transform:scaleX(1.2347);font-family:'Liberation Sans',sans-serif;font-size:13.5px;font-weight:normal;color:#2a2a2a;">--</span>
<span class="t" style="left:699.51px;top:455.30px;transform:scaleX(1.0065);font-family:'Liberation Sans',sans-serif;font-size:13.4px;font-weight:normal;color:#000;">%</span>
<span class="t" style="left:768.71px;top:455.30px;transform:scaleX(1.0065);font-family:'Liberation Sans',sans-serif;font-size:13.4px;font-weight:normal;color:#000;">%</span>
<span class="t" style="left:854.13px;top:454.60px;transform:scaleX(1.2347);font-family:'Liberation Sans',sans-serif;font-size:13.5px;font-weight:normal;color:#2a2a2a;">--</span>
<span class="t" style="left:35.04px;top:479.10px;transform:scaleX(1.0109);font-family:'Liberation Sans',sans-serif;font-size:11.4px;font-weight:normal;color:#000;">|Retirar itens com quantidade igual a zero</span>
<span class="t" style="left:125.55px;top:502.20px;transform:scaleX(1.0965);font-family:'Liberation Sans',sans-serif;font-size:13.6px;font-weight:bold;color:#000;-webkit-text-stroke:0.2px #000;">Dados do pedido:</span>
<span class="t" style="left:43.01px;top:529.00px;transform:scaleX(0.9520);font-family:'Liberation Sans',sans-serif;font-size:11.5px;font-weight:normal;color:#2a2a2a;">Preços sem ICMS incluso</span>
<span class="t" style="left:35.92px;top:552.00px;transform:scaleX(1.0495);font-family:'Liberation Sans',sans-serif;font-size:11.5px;font-weight:bold;color:#000;-webkit-text-stroke:0.18px #000;">Qtd. produtos:</span>
<span class="t" style="left:35.93px;top:580.20px;transform:scaleX(1.0367);font-family:'Liberation Sans',sans-serif;font-size:11.5px;font-weight:bold;color:#000;-webkit-text-stroke:0.18px #000;">Qtd. de linhas:</span>
<span class="t" style="left:284.21px;top:556.00px;transform:scaleX(1.0718);font-family:'Liberation Sans',sans-serif;font-size:11.4px;font-weight:normal;color:#555;">0</span>
<span class="t" style="left:534.11px;top:523.80px;transform:scaleX(1.1684);font-family:'Liberation Sans',sans-serif;font-size:11.5px;font-weight:bold;color:#000;-webkit-text-stroke:0.18px #000;">IPI total:</span>
<span class="t" style="left:526.93px;top:552.00px;transform:scaleX(1.0511);font-family:'Liberation Sans',sans-serif;font-size:11.5px;font-weight:bold;color:#000;-webkit-text-stroke:0.18px #000;">ICMS total</span>
<span class="t" style="left:521.32px;top:580.20px;transform:scaleX(1.0886);font-family:'Liberation Sans',sans-serif;font-size:11.5px;font-weight:bold;color:#000;-webkit-text-stroke:0.18px #000;">Valor frete:</span>
<span class="t" style="left:746.28px;top:524.00px;transform:scaleX(1.0505);font-family:'Liberation Sans',sans-serif;font-size:11.5px;font-weight:bold;color:#000;-webkit-text-stroke:0.18px #000;">Total pedido:</span>
<span class="t" style="left:762.34px;top:552.00px;transform:scaleX(1.0451);font-family:'Liberation Sans',sans-serif;font-size:11.5px;font-weight:bold;color:#000;-webkit-text-stroke:0.18px #000;">Desconto:</span>
<span class="t" style="left:786.98px;top:579.80px;transform:scaleX(1.1325);font-family:'Liberation Sans',sans-serif;font-size:11.5px;font-weight:bold;color:#000;-webkit-text-stroke:0.18px #000;">Total:</span>
<span class="t" style="left:884.87px;top:554.30px;transform:scaleX(1.1556);font-family:'Liberation Sans',sans-serif;font-size:13.5px;font-weight:bold;color:#14146e;">--</span>
<span class="t" style="left:35.17px;top:611.00px;transform:scaleX(1.0251);font-family:'Liberation Sans',sans-serif;font-size:13.6px;font-weight:bold;color:#000;-webkit-text-stroke:0.2px #000;">Transportadora</span>
<span class="t" style="left:36.14px;top:633.80px;transform:scaleX(1.0451);font-family:'Liberation Sans',sans-serif;font-size:11.5px;font-weight:bold;color:#000;-webkit-text-stroke:0.18px #000;">Frete por conta do:</span>
<span class="t" style="left:42.89px;top:653.00px;transform:scaleX(1.0200);font-family:'Liberation Sans',sans-serif;font-size:11.5px;font-weight:normal;color:#2a2a2a;">Sem frete</span>
<span class="t" style="left:289.38px;top:633.80px;transform:scaleX(1.0774);font-family:'Liberation Sans',sans-serif;font-size:11.5px;font-weight:bold;color:#000;-webkit-text-stroke:0.18px #000;">Transportador(a):</span>
<span class="t" style="left:125.98px;top:677.20px;transform:scaleX(1.1225);font-family:'Liberation Sans',sans-serif;font-size:13.6px;font-weight:bold;color:#000;-webkit-text-stroke:0.2px #000;">Assinatura digital:</span>
<span class="t" style="left:442.54px;top:757.20px;transform:scaleX(0.9944);font-family:'Liberation Mono',monospace;font-size:12px;font-weight:bold;color:#fff;-webkit-text-stroke:0.45px #fff;text-shadow:1px 1px 0 #5e420e,1px 0 0 #6a4a12">Confirmar</span>
<span class="t" style="left:546.78px;top:758.40px;transform:scaleX(0.9791);font-family:'Liberation Mono',monospace;font-size:12px;font-weight:bold;color:#fff;-webkit-text-stroke:0.45px #fff;text-shadow:1px 1px 0 #5e420e,1px 0 0 #6a4a12">Voltar</span>
</body></html>
